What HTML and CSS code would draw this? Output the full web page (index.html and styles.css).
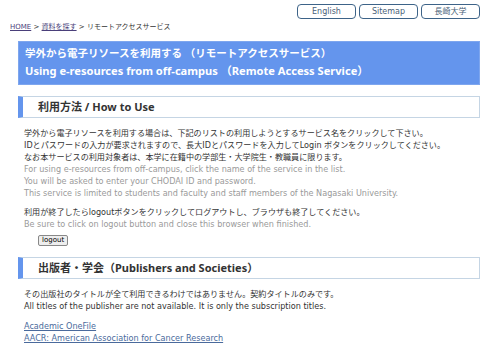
FILE: index.html
```html
<!DOCTYPE html>
<html lang="ja">
<head>
  <meta charset="UTF-8" />
  <title>リモートアクセスサービス</title>
  <link rel="stylesheet" href="styles.css">
</head>
<body>
  <div class="topnav">
    <a href="#">English</a>
    <a href="#">Sitemap</a>
    <a href="#">長崎大学</a>
  </div>

  <div class="breadcrumb">
    <a href="#">HOME</a> &gt; <a href="#">資料を探す</a> &gt; リモートアクセスサービス
  </div>

  <h1 class="title">
    学外から電子リソースを利用する （リモートアクセスサービス）<br>
    <span class="title-en">Using e-resources from off-campus （Remote Access Service）</span>
  </h1>

  <h2 class="section">利用方法 / How to Use</h2>

  <div class="text">
    <p>
      学外から電子リソースを利用する場合は、下記のリストの利用しようとするサービス名をクリックして下さい。<br>
      IDとパスワードの入力が要求されますので、長大IDとパスワードを入力してLogin ボタンをクリックしてください。<br>
      なお本サービスの利用対象者は、本学に在籍中の学部生・大学院生・教職員に限ります。<br>
      <span class="grey">For using e-resources from off-campus, click the name of the service in the list.<br>
      You will be asked to enter your CHODAI ID and password.<br>
      This service is limited to students and faculty and staff members of the Nagasaki University.</span>
    </p>
    <p>
      利用が終了したらlogoutボタンをクリックしてログアウトし、ブラウザも終了してください。<br>
      <span class="grey">Be sure to click on logout button and close this browser when finished.</span>
    </p>
    <div class="logout-row">
      <button class="logout">logout</button>
    </div>
  </div>

  <h2 class="section">出版者・学会（Publishers and Societies）</h2>

  <div class="text">
    <p>
      その出版社のタイトルが全て利用できるわけではありません。契約タイトルのみです。<br>
      All titles of the publisher are not available. It is only the subscription titles.
    </p>
    <ul class="links">
      <li><a href="#">Academic OneFile</a></li>
      <li><a href="#">AACR: American Association for Cancer Research</a></li>
    </ul>
  </div>
</body>
</html>
```

FILE: styles.css
```css
body {
  margin: 0;
  padding: 0 18px;
  font-family: 'DejaVu Sans', 'Noto Sans CJK JP', sans-serif;
  font-size: 8.1px;
  color: #333;
  background: #fff;
}

a {
  color: #4a6a9c;
}

.topnav {
  display: flex;
  justify-content: flex-end;
  gap: 3px;
  padding-top: 4px;
}

.topnav a {
  display: block;
  width: 57px;
  height: 13px;
  line-height: 13px;
  text-align: center;
  border: 1px solid #3d6388;
  border-radius: 4px;
  color: #4a5f78;
  text-decoration: none;
  font-size: 8px;
}

.breadcrumb {
  margin: 3px 0 0 -8px;
  font-size: 7px;
  color: #333;
  line-height: 10px;
}

.breadcrumb a {
  color: #4a3f7a;
}

.title {
  margin: 9px 0 0;
  padding: 3px 6px 4px;
  background: #6495ed;
  border: 1px solid #7ea6ee;
  color: #fff;
  font-family: 'Noto Sans', 'Noto Sans CJK JP', sans-serif;
  font-size: 10.5px;
  font-weight: bold;
  line-height: 17px;
}

.title-en {
  font-size: 11.1px;
}

.section {
  margin: 11px 0 0;
  padding: 0 0 0 15px;
  height: 20px;
  line-height: 20px;
  border: 1px solid #c5d5e4;
  border-left: 5px solid #6495ed;
  font-family: 'Noto Sans', 'Noto Sans CJK JP', sans-serif;
  font-size: 11px;
  font-weight: bold;
  color: #333;
}

.text {
  padding: 0 6px;
  line-height: 12px;
}

.text p {
  margin: 9px 0 0;
}

.text p + p {
  margin-top: 7px;
}

.grey {
  color: #9a9a9a;
}

.logout-row {
  padding: 5px 0 0 14px;
  line-height: 11px;
}

.logout {
  display: block;
  font-family: inherit;
  font-size: 7px;
  line-height: 9px;
  padding: 0 3px;
  background: #eee;
  border: 1px solid #888;
  border-radius: 2px;
}

.links {
  list-style: none;
  margin: 8px 0 0;
  padding: 0;
}
```
